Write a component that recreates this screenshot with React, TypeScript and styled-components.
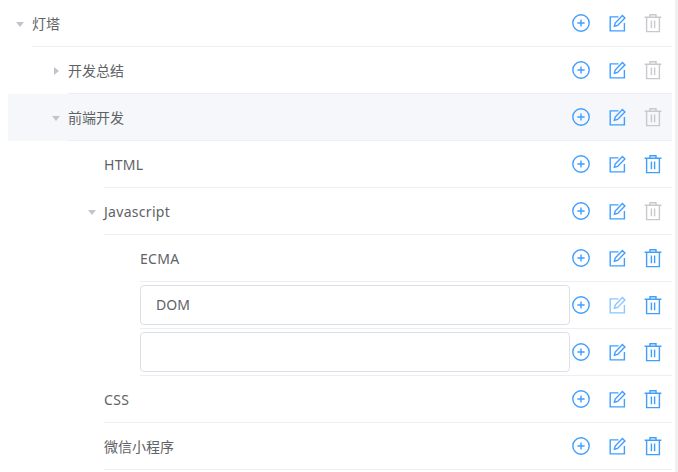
import React from "react";
import styled, { createGlobalStyle } from "styled-components";

const Global = createGlobalStyle`
  html, body { margin: 0; padding: 0; background: #fff; overflow: hidden; }
  body { font-family: "Noto Sans", "Noto Sans CJK SC", sans-serif; font-size: 14px; color: #606266; }
`;

const Page = styled.div`
  display: flex;
  height: 472px;
  overflow: hidden;
  padding-left: 8px;
`;

const Tree = styled.div`
  width: 664px;
  flex: none;
`;

const Track = styled.div`
  width: 3px;
  flex: none;
  margin-left: auto;
  background: #f0f0f0;
`;

const Row = styled.div<{ $level: number; $active?: boolean }>`
  height: 47px;
  display: flex;
  align-items: stretch;
  padding-left: ${(p) => p.$level * 36}px;
  background: ${(p) => (p.$active ? "#f5f7fa" : "transparent")};
`;

const ArrowSlot = styled.div`
  width: 24px;
  flex: none;
  display: flex;
  align-items: center;
  justify-content: center;
`;

const Body = styled.div`
  flex: 1;
  min-width: 0;
  display: flex;
  align-items: center;
  border-bottom: 1px solid #ebeef5;
`;

const Label = styled.span<{ $latin?: boolean }>`
  flex: 1;
  line-height: 46px;
  padding-top: 2px;
  letter-spacing: ${(p) => (p.$latin ? "0.3px" : "0")};
`;

const InputWrap = styled.div`
  flex: none;
  width: 430px;
  margin-bottom: 1px;
`;

const TextInput = styled.input`
  display: block;
  box-sizing: border-box;
  width: 100%;
  height: 40px;
  padding: 0 15px;
  border: 1px solid #dcdfe6;
  border-radius: 4px;
  outline: none;
  background: #fff;
  font: inherit;
  color: #606266;
`;

const Actions = styled.div`
  flex: none;
  width: 102px;
  margin-left: auto;
  display: flex;
  align-items: center;
  gap: 16px;
  padding-left: 1px;
  padding-bottom: 1px;
  box-sizing: border-box;
`;

const IconBtn = styled.span<{ $tone: "on" | "dim" | "off" }>`
  width: 20px;
  height: 20px;
  flex: none;
  display: block;
  color: ${(p) => (p.$tone === "off" ? "#c8c9cc" : p.$tone === "dim" ? "#8cc5ff" : "#409eff")};
`;

const Svg = styled.svg`
  display: block;
  width: 20px;
  height: 20px;
  fill: none;
  stroke: currentColor;
  stroke-width: 1.4;
`;

const Arrow = ({ open }: { open: boolean }) => (
  <svg width="10" height="10" viewBox="0 0 10 10" style={{ display: "block" }}>
    <path d={open ? "M1 3h8L5 8z" : "M3 1v8l5-4z"} fill="#c0c4cc" />
  </svg>
);

const Plus = () => (
  <IconBtn $tone="on">
    <Svg viewBox="0 0 20 20">
      <circle cx="10" cy="10" r="8.2" />
      <path d="M10 6.4v7.2M6.4 10h7.2" />
    </Svg>
  </IconBtn>
);

const Edit = ({ dim }: { dim?: boolean }) => (
  <IconBtn $tone={dim ? "dim" : "on"}>
    <Svg viewBox="0 0 20 20">
      <path d="M11.5 3.9H3.2v14h14.2V10" />
      <path d="M7.4 13.2l.8-3.2 7.2-7.4 2.5 2.4-7.3 7.4z" />
    </Svg>
  </IconBtn>
);

const Trash = ({ off }: { off?: boolean }) => (
  <IconBtn $tone={off ? "off" : "on"}>
    <Svg viewBox="0 0 20 20">
      <path d="M1.6 4.2h16.8M7 4V1.8h6V4M3.6 4.2v14.4h12.8V4.2M8.4 7.5v7.8M11.6 7.5v7.8" />
    </Svg>
  </IconBtn>
);

type Item = {
  level: number;
  label?: string;
  latin?: boolean;
  input?: string;
  arrow?: "open" | "closed";
  active?: boolean;
  trashOff?: boolean;
  editDim?: boolean;
};

const items: Item[] = [
  { level: 0, label: "灯塔", arrow: "open", trashOff: true },
  { level: 1, label: "开发总结", arrow: "closed", trashOff: true },
  { level: 1, label: "前端开发", arrow: "open", active: true, trashOff: true },
  { level: 2, label: "HTML", latin: true },
  { level: 2, label: "Javascript", latin: true, arrow: "open", trashOff: true },
  { level: 3, label: "ECMA", latin: true },
  { level: 3, input: "DOM", editDim: true },
  { level: 3, input: "" },
  { level: 2, label: "CSS", latin: true },
  { level: 2, label: "微信小程序" },
];

export default function App() {
  return (
    <>
      <Global />
      <Page>
        <Tree>
          {items.map((it, i) => (
            <Row key={i} $level={it.level} $active={it.active}>
              <ArrowSlot>{it.arrow && <Arrow open={it.arrow === "open"} />}</ArrowSlot>
              <Body>
                {it.input !== undefined ? (
                  <InputWrap>
                    <TextInput defaultValue={it.input} />
                  </InputWrap>
                ) : (
                  <Label $latin={it.latin}>{it.label}</Label>
                )}
                <Actions>
                  <Plus />
                  <Edit dim={it.editDim} />
                  <Trash off={it.trashOff} />
                </Actions>
              </Body>
            </Row>
          ))}
        </Tree>
        <Track />
      </Page>
    </>
  );
}
